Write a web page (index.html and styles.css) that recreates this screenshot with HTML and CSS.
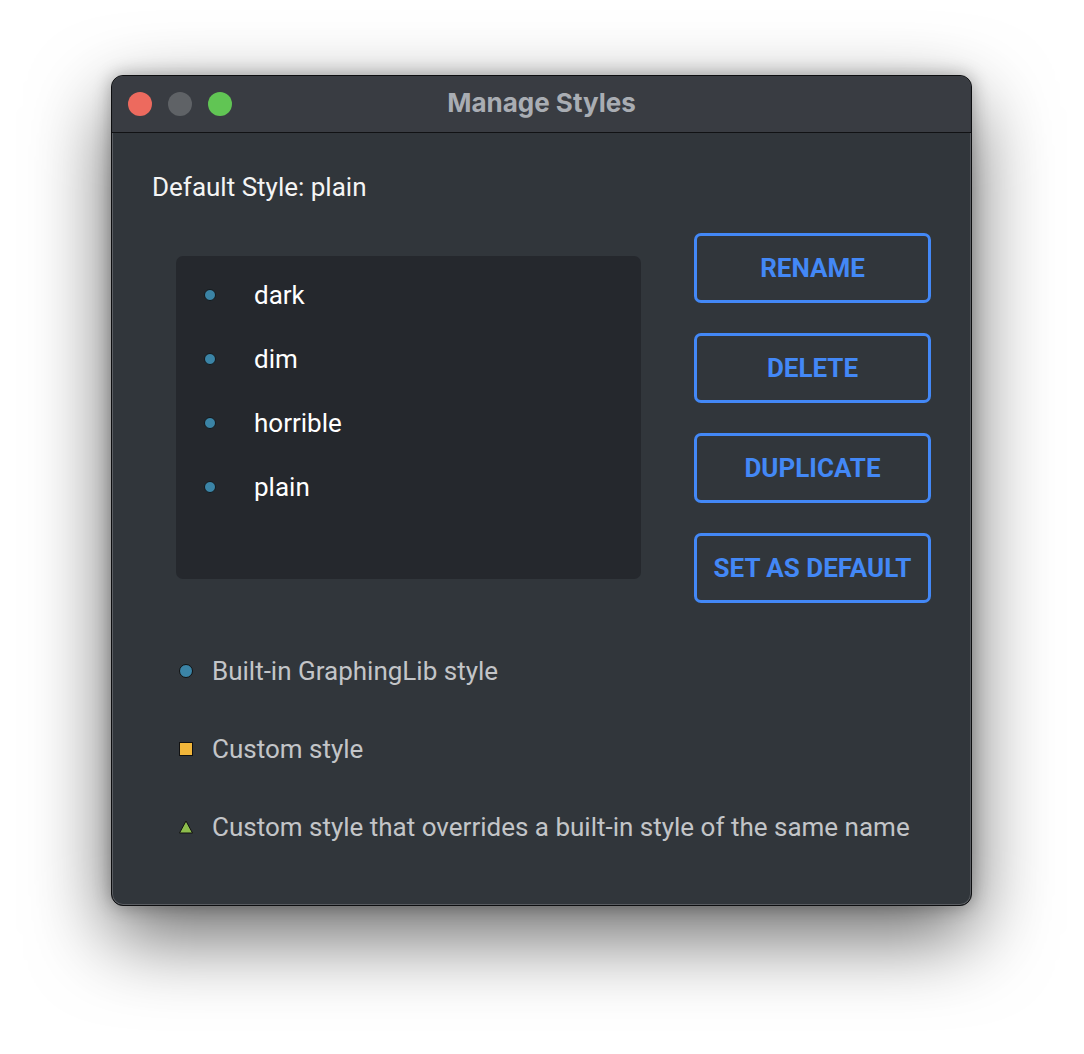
FILE: index.html
```html
<!DOCTYPE html>
<html>
<head>
<meta charset="utf-8">
<link rel="stylesheet" href="styles.css">
</head>
<body>
<div class="page">
  <div class="window">
    <div class="titlebar">
      <div class="lights">
        <span class="light red"></span>
        <span class="light grey"></span>
        <span class="light green"></span>
      </div>
      <div class="title">Manage Styles</div>
    </div>
    <div class="content">
      <div class="default-label">Default Style: plain</div>
      <div class="main">
        <div class="list">
          <div class="item"><span class="dot"></span><span class="name">dark</span></div>
          <div class="item"><span class="dot"></span><span class="name">dim</span></div>
          <div class="item"><span class="dot"></span><span class="name">horrible</span></div>
          <div class="item"><span class="dot"></span><span class="name">plain</span></div>
        </div>
        <div class="buttons">
          <button class="btn">RENAME</button>
          <button class="btn">DELETE</button>
          <button class="btn">DUPLICATE</button>
          <button class="btn">SET AS DEFAULT</button>
        </div>
      </div>
      <div class="legend">
        <div class="legend-row">
          <span class="icon"><svg width="16" height="16" viewBox="0 0 16 16"><circle cx="8" cy="8" r="6.5" fill="#3b84a6" stroke="#111" stroke-width="1"/></svg></span>
          <span class="legend-text">Built-in GraphingLib style</span>
        </div>
        <div class="legend-row">
          <span class="icon"><svg width="16" height="16" viewBox="0 0 16 16"><rect x="1.5" y="1.5" width="13" height="13" fill="#f1b63a" stroke="#111" stroke-width="1"/></svg></span>
          <span class="legend-text">Custom style</span>
        </div>
        <div class="legend-row">
          <span class="icon"><svg width="16" height="16" viewBox="0 0 16 16"><polygon points="8,2 14.5,14 1.5,14" fill="#8dbd4c" stroke="#111" stroke-width="1" stroke-linejoin="round"/></svg></span>
          <span class="legend-text">Custom style that overrides a built-in style of the same name</span>
        </div>
      </div>
    </div>
  </div>
</div>
</body>
</html>
```

FILE: styles.css
```css
html, body {
  margin: 0;
  padding: 0;
  background: #ffffff;
}

.page {
  width: 1084px;
  height: 1054px;
  padding: 75px 0 0 111px;
  box-sizing: border-box;
}

.window {
  width: 861px;
  height: 831px;
  box-sizing: border-box;
  background: #31363b;
  border: 1px solid #0d0e10;
  border-radius: 12px;
  box-shadow: inset 0 0 0 1px #5a5d62, 0 30px 80px rgba(0, 0, 0, 0.6), 0 0 18px rgba(0, 0, 0, 0.3);
  overflow: hidden;
  font-family: Roboto, "Liberation Sans", sans-serif;
}

.titlebar {
  height: 56px;
  background: #393c42;
  border-bottom: 1px solid #111214;
  display: flex;
  align-items: center;
  position: relative;
  border-radius: 11px 11px 0 0;
}

.lights {
  display: flex;
  gap: 16px;
  padding-left: 16px;
}

.light {
  width: 24px;
  height: 24px;
  border-radius: 50%;
  display: block;
}

.red { background: #ed6a5e; }
.grey { background: #5f6266; }
.green { background: #61c554; }

.title {
  position: absolute;
  left: 0;
  right: 0;
  top: 0;
  height: 56px;
  line-height: 54px;
  text-align: center;
  font-family: Inter, "Liberation Sans", sans-serif;
  font-weight: 700;
  font-size: 26px;
  color: #a9adb3;
  pointer-events: none;
}

.content {
  padding: 40px 40px 0 40px;
}

.default-label {
  font-size: 26px;
  line-height: 28px;
  color: #f4f4f4;
}

.main {
  display: flex;
  align-items: flex-start;
  margin-top: 32px;
}

.list {
  margin-top: 23px;
  margin-left: 24px;
  width: 465px;
  height: 323px;
  background: #25282d;
  border-radius: 7px;
  padding-top: 7px;
  box-sizing: border-box;
}

.item {
  height: 64px;
  display: flex;
  align-items: center;
}

.dot {
  width: 12px;
  height: 12px;
  border-radius: 50%;
  background: #3b84a6;
  box-sizing: border-box;
  border: 1px solid #14181b;
  margin-left: 28px;
}

.name {
  margin-left: 38px;
  font-size: 26px;
  color: #ffffff;
}

.buttons {
  margin-left: 53px;
  display: flex;
  flex-direction: column;
  gap: 30px;
}

.btn {
  width: 237px;
  height: 70px;
  box-sizing: border-box;
  border: 3px solid #4388f6;
  border-radius: 7px;
  background: transparent;
  color: #4388f6;
  font-family: Roboto, "Liberation Sans", sans-serif;
  font-weight: 700;
  font-size: 26px;
  padding: 0;
}

.legend {
  margin-top: 48px;
  display: flex;
  flex-direction: column;
  gap: 38px;
}

.legend-row {
  height: 40px;
  display: flex;
  align-items: center;
}

.icon {
  margin-left: 26px;
  width: 16px;
  height: 16px;
  display: block;
}

.icon svg {
  display: block;
}

.legend-text {
  margin-left: 18px;
  font-size: 26px;
  color: #c3c5c8;
}
```
